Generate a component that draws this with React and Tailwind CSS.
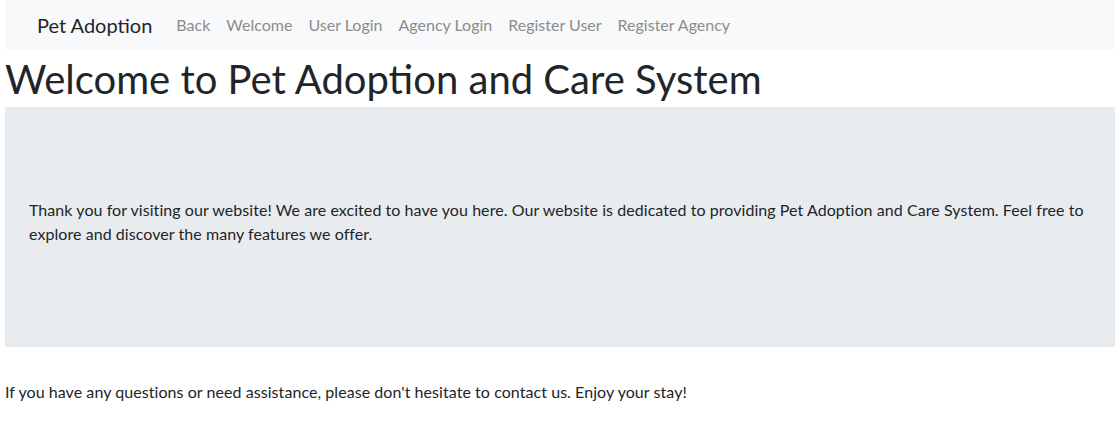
import React from 'react';

const links = ['Back', 'Welcome', 'User Login', 'Agency Login', 'Register User', 'Register Agency'];

const App = () => {
  return (
    <div className="ml-[5px] w-[1110px] text-[#212529]" style={{ fontFamily: 'Lato, sans-serif' }}>
      {/* Navbar */}
      <nav className="h-[50px] bg-[#f8f9fa] flex items-center pl-[32px]">
        <a className="text-[20px] leading-[30px] mr-[16px] text-[#212529]">Pet Adoption</a>
        <ul className="flex">
          {links.map((link) => (
            <li key={link}>
              <a className="block px-[8px] text-[16px] leading-[24px] text-[#8c8c8c]">{link}</a>
            </li>
          ))}
        </ul>
      </nav>

      <h1 className="text-[40px] leading-[48px] font-normal mt-[5px] mb-[4px]">
        Welcome to Pet Adoption and Care System
      </h1>

      {/* Jumbotron */}
      <div className="bg-[#e9ecef] pt-[91px] pb-[101px] px-[24px]">
        <p className="text-[16px] leading-[24px] tracking-[0.06px]">
          Thank you for visiting our website! We are excited to have you here. Our website is dedicated to providing Pet Adoption and Care System. Feel free to explore and discover the many features we offer.
        </p>
      </div>

      <p className="mt-[33px] text-[16px] leading-[24px] tracking-[0.06px]">
        If you have any questions or need assistance, please don't hesitate to contact us. Enjoy your stay!
      </p>
    </div>
  );
};

export default App;
